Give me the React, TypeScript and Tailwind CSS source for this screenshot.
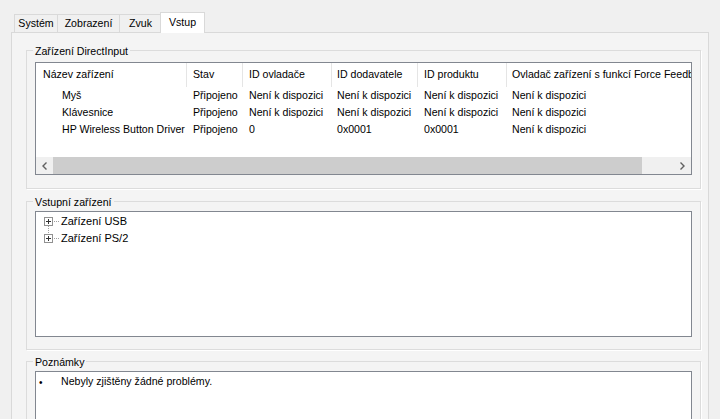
const font = "font-['Liberation_Sans',Arial,sans-serif]"

const cols = [
  { title: 'Název zařízení', w: 151, pl: 7 },
  { title: 'Stav', w: 56, pl: 6 },
  { title: 'ID ovladače', w: 89, pl: 6 },
  { title: 'ID dodavatele', w: 86, pl: 5 },
  { title: 'ID produktu', w: 89, pl: 6 },
  { title: 'Ovladač zařízení s funkcí Force Feedback', w: 240, pl: 5 },
]

const rows = [
  ['Myš', 'Připojeno', 'Není k dispozici', 'Není k dispozici', 'Není k dispozici', 'Není k dispozici'],
  ['Klávesnice', 'Připojeno', 'Není k dispozici', 'Není k dispozici', 'Není k dispozici', 'Není k dispozici'],
  ['HP Wireless Button Driver', 'Připojeno', '0', '0x0001', '0x0001', 'Není k dispozici'],
]

function Tab({ label, w, active = false }: { label: string; w: number; active?: boolean }) {
  if (active)
    return (
      <div
        className="relative z-10 -mb-px -ml-[2px] flex h-[21px] items-center justify-center border border-b-0 border-[#d9d9d9] bg-white"
        style={{ width: w }}
      >
        {label}
      </div>
    )
  return (
    <div
      className="-ml-px flex h-[18px] items-center justify-center border border-b-0 border-[#d9d9d9] bg-[#f0f0f0] first:ml-0"
      style={{ width: w }}
    >
      {label}
    </div>
  )
}

function Group({ title, className = '', children }: { title: string; className?: string; children: React.ReactNode }) {
  return (
    <div className={`relative ml-[14px] mr-[7px] border border-[#dcdcdc] shadow-[1px_1px_0_#fff] ${className}`}>
      <span className="absolute -top-[7px] left-[6px] bg-[#f4f4f4] px-[2px] leading-[14px]">{title}</span>
      {children}
    </div>
  )
}

function Chevron({ dir }: { dir: 'l' | 'r' }) {
  return (
    <svg width="5" height="8" viewBox="0 0 5 8">
      <path d={dir === 'l' ? 'M4.5 0.5 L1 4 L4.5 7.5' : 'M0.5 0.5 L4 4 L0.5 7.5'} fill="none" stroke="#606060" strokeWidth="1.4" />
    </svg>
  )
}

function TreeGlyph({ first }: { first: boolean }) {
  return (
    <svg width="17" height="17" viewBox="0 0 17 17" className="shrink-0">
      {first ? (
        <line x1="4.5" y1="13" x2="4.5" y2="17" stroke="#a0a0a0" strokeDasharray="1 1" />
      ) : (
        <line x1="4.5" y1="0" x2="4.5" y2="4" stroke="#a0a0a0" strokeDasharray="1 1" />
      )}
      <rect x="0.5" y="4.5" width="8" height="8" fill="#fff" stroke="#919191" />
      <line x1="2" y1="8.5" x2="7" y2="8.5" stroke="#333" />
      <line x1="4.5" y1="6" x2="4.5" y2="11" stroke="#333" />
      <line x1="10" y1="8.5" x2="15" y2="8.5" stroke="#a0a0a0" strokeDasharray="1 1" />
    </svg>
  )
}

export default function App() {
  return (
    <div className={`${font} h-[419px] w-[720px] overflow-hidden bg-[#f0f0f0] pl-[11px] pt-[12px] text-[10.6px] text-black`}>
      <div className="flex h-[20px] items-end pl-[3px]">
        <Tab label="Systém" w={44} />
        <Tab label="Zobrazení" w={63} />
        <Tab label="Zvuk" w={43} />
        <Tab label="Vstup" w={45} active />
      </div>

      <div className="h-[400px] w-[698px] border border-[#d9d9d9] bg-[#f4f4f4] pt-[17px]">
        <Group title="Zařízení DirectInput" className="pb-[13px] pl-[8px] pr-[8px] pt-[11px]">
          <div className="flex h-[113px] flex-col overflow-hidden border border-[#828790] bg-white">
            <div className="flex h-[24px] shrink-0">
              {cols.map((c, i) => (
                <div
                  key={i}
                  className="flex shrink-0 items-center overflow-hidden whitespace-nowrap border-r border-[#e5e5e5]"
                  style={{ width: c.w, paddingLeft: c.pl }}
                >
                  {c.title}
                </div>
              ))}
            </div>
            {rows.map((r, ri) => (
              <div key={ri} className="flex h-[17px] shrink-0">
                {r.map((cell, ci) => (
                  <div
                    key={ci}
                    className="flex shrink-0 items-center whitespace-nowrap"
                    style={{ width: cols[ci].w, paddingLeft: ci === 0 ? 26 : cols[ci].pl }}
                  >
                    {cell}
                  </div>
                ))}
              </div>
            ))}
            <div className="flex-1" />
            <div className="flex h-[17px] shrink-0 bg-[#f0f0f0]">
              <div className="flex w-[17px] items-center justify-center">
                <Chevron dir="l" />
              </div>
              <div className="w-[589px] bg-[#cdcdcd]" />
              <div className="flex-1" />
              <div className="flex w-[17px] items-center justify-center">
                <Chevron dir="r" />
              </div>
            </div>
          </div>
        </Group>

        <Group title="Vstupní zařízení" className="mt-[12px] pb-[12px] pl-[8px] pr-[8px] pt-[9px]">
          <div className="h-[126px] border border-[#828790] bg-white pl-[8px] pt-[1px]">
            <div className="flex h-[17px] items-center">
              <TreeGlyph first />
              <span className="text-[11px]">Zařízení USB</span>
            </div>
            <div className="flex h-[17px] items-center">
              <TreeGlyph first={false} />
              <span className="text-[11px]">Zařízení PS/2</span>
            </div>
          </div>
        </Group>

        <Group title="Poznámky" className="mt-[11px] pl-[8px] pr-[8px] pt-[9px]">
          <div className="h-[80px] border border-[#828790] bg-white pt-[3px]">
            <div className="flex h-[14px] items-center">
              <span className="w-[25px] pl-[3px] text-[10px]">•</span>
              <span>Nebyly zjištěny žádné problémy.</span>
            </div>
          </div>
        </Group>
      </div>
    </div>
  )
}
